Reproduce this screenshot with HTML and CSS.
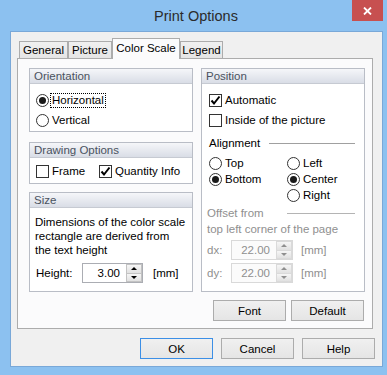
FILE: index.html
```html
<!DOCTYPE html>
<html lang="en">
<head>
  <meta charset="UTF-8" />
  <title>Print Options</title>
  <link rel="stylesheet" href="styles.css">
</head>
<body>
  <div class="window">
    <div class="titlebar">
      <div></div>
      <div class="title">Print Options</div>
      <div class="caption-buttons">
        <div class="close">
          <svg width="9" height="8" viewBox="0 0 9 8">
            <path d="M1 0.5 L8 7.5 M8 0.5 L1 7.5" stroke="#fff" stroke-width="1.8" fill="none"/>
          </svg>
        </div>
      </div>
    </div>

    <div class="client">
      <div class="tabs">
        <div class="tab tab-general">General</div>
        <div class="tab tab-picture">Picture</div>
        <div class="tab tab-scale active">Color Scale</div>
        <div class="tab tab-legend">Legend</div>
      </div>

      <div class="panel">
        <div class="columns">
          <div class="col">
            <div class="group orientation">
              <div class="group-head">Orientation</div>
              <div class="group-body">
                <div class="option">
                  <span class="radio checked"></span>
                  <span class="focus">Horizontal</span>
                </div>
                <div class="option">
                  <span class="radio"></span>
                  <span>Vertical</span>
                </div>
              </div>
            </div>

            <div class="group drawing">
              <div class="group-head">Drawing Options</div>
              <div class="group-body inline">
                <div class="option frame-opt">
                  <span class="check"></span>
                  <span>Frame</span>
                </div>
                <div class="option">
                  <span class="check">
                    <svg width="11" height="11" viewBox="0 0 11 11"><path d="M1.5 5.5 L4 8.5 L9.5 1.5" stroke="#000" stroke-width="2" fill="none"/></svg>
                  </span>
                  <span>Quantity Info</span>
                </div>
              </div>
            </div>

            <div class="group size">
              <div class="group-head">Size</div>
              <div class="group-body">
                <p class="note">Dimensions of the color scale rectangle are derived from the text height</p>
                <div class="field-row">
                  <span class="field-label height-label">Height:</span>
                  <div class="spin">
                    <span class="spin-value">3.00</span>
                    <span class="spin-arrows">
                      <span class="arrow up"></span>
                      <span class="arrow down"></span>
                    </span>
                  </div>
                  <span class="unit">[mm]</span>
                </div>
              </div>
            </div>
          </div>

          <div class="col">
            <div class="group position">
              <div class="group-head">Position</div>
              <div class="group-body">
                <div class="option">
                  <span class="check">
                    <svg width="11" height="11" viewBox="0 0 11 11"><path d="M1.5 5.5 L4 8.5 L9.5 1.5" stroke="#000" stroke-width="2" fill="none"/></svg>
                  </span>
                  <span>Automatic</span>
                </div>
                <div class="option">
                  <span class="check"></span>
                  <span>Inside of the picture</span>
                </div>

                <div class="sep-row align-head">
                  <span class="sep-label">Alignment</span>
                  <span class="sep-line"></span>
                </div>

                <div class="radio-grid">
                  <div class="option small"><span class="radio"></span><span>Top</span></div>
                  <div class="option small"><span class="radio"></span><span>Left</span></div>
                  <div class="option small"><span class="radio checked"></span><span>Bottom</span></div>
                  <div class="option small"><span class="radio checked"></span><span>Center</span></div>
                  <div></div>
                  <div class="option small"><span class="radio"></span><span>Right</span></div>
                </div>

                <div class="offset disabled">
                  <div class="sep-row offset-head">
                    <span class="sep-label">Offset from</span>
                    <span class="sep-line"></span>
                  </div>
                  <div class="offset-sub">top left corner of the page</div>

                  <div class="field-row">
                    <span class="field-label xy-label">dx:</span>
                    <div class="spin">
                      <span class="spin-value">22.00</span>
                      <span class="spin-arrows">
                        <span class="arrow up"></span>
                        <span class="arrow down"></span>
                      </span>
                    </div>
                    <span class="unit">[mm]</span>
                  </div>
                  <div class="field-row">
                    <span class="field-label xy-label">dy:</span>
                    <div class="spin">
                      <span class="spin-value">22.00</span>
                      <span class="spin-arrows">
                        <span class="arrow up"></span>
                        <span class="arrow down"></span>
                      </span>
                    </div>
                    <span class="unit">[mm]</span>
                  </div>
                </div>
              </div>
            </div>
          </div>
        </div>

        <div class="panel-buttons">
          <button class="btn">Font</button>
          <button class="btn">Default</button>
        </div>
      </div>

      <div class="dialog-buttons">
        <button class="btn default">OK</button>
        <button class="btn">Cancel</button>
        <button class="btn">Help</button>
      </div>
    </div>
  </div>
</body>
</html>
```

FILE: styles.css
```css
* {
  box-sizing: border-box;
}

body {
  margin: 0;
  background-color: #8cc1f0;
  color: #000;
  font-family: "Liberation Sans", Arial, sans-serif;
  font-size: 11.5px;
}

.window {
  width: 387px;
  height: 375px;
  background-color: #8cc1f0;
  display: flex;
  flex-direction: column;
}

/* title bar */
.titlebar {
  height: 31px;
  display: grid;
  grid-template-columns: 1fr auto 1fr;
}

.title {
  padding: 8px 0 0 5px;
  font-size: 14.5px;
  line-height: 16px;
  color: #2b2b2b;
}

.caption-buttons {
  display: flex;
  justify-content: flex-end;
  align-items: flex-start;
  padding-right: 4px;
}

.close {
  width: 31px;
  height: 21px;
  background-color: #c75050;
  display: flex;
  align-items: center;
  justify-content: center;
}

/* client area */
.client {
  margin-left: 10px;
  width: 373px;
  height: 336px;
  background-color: #f0f0f0;
  border: 1px solid #79a8d8;
  padding: 6px 7px 7px 6px;
  display: flex;
  flex-direction: column;
}

.tabs {
  height: 20px;
  margin-left: 2px;
  display: flex;
  align-items: flex-end;
}

.tab {
  height: 17px;
  border: 1px solid #acacac;
  border-bottom: none;
  background: linear-gradient(#f0f0f0, #e5e5e5);
  display: flex;
  align-items: center;
  justify-content: center;
}

.tab-general { width: 49px; }
.tab-picture { width: 44px; }
.tab-scale { width: 68px; }
.tab-legend { width: 43px; }

.tab.active {
  height: 21px;
  margin-bottom: -1px;
  padding-bottom: 2px;
  background: #fbfbfc;
  position: relative;
  z-index: 1;
}

.panel {
  width: 356px;
  height: 271px;
  border: 1px solid #acacac;
  background-color: #fbfbfc;
  padding: 9px 7px 7px 11px;
}

.columns {
  height: 224px;
  display: flex;
  gap: 8px;
}

.col {
  width: 164px;
  display: flex;
  flex-direction: column;
}

/* group boxes */
.group {
  border: 1px solid #b9bdc6;
  background-color: #fff;
}

.group-head {
  height: 15px;
  padding-left: 4px;
  line-height: 14px;
  color: #4a5260;
  background: linear-gradient(#f5f6f9, #d9dde6);
  border-bottom: 1px solid #c6cad2;
}

.orientation { height: 64px; }
.orientation .group-body { padding: 6px 0 0 6px; }

.drawing { height: 42px; margin-top: 10px; }
.drawing .group-body { padding: 3px 0 0 6px; }

.size { height: 100px; margin-top: 8px; }
.size .group-body { padding: 7px 4px 0 5px; }

.position { height: 224px; }
.position .group-body { padding: 6px 9px 0 7px; }

.inline {
  display: flex;
}

.option {
  height: 20px;
  display: flex;
  align-items: center;
  gap: 3px;
}

.option.small {
  height: 16px;
}

.frame-opt {
  width: 63px;
}

.radio {
  width: 13px;
  height: 13px;
  flex: none;
  border: 1px solid #333;
  border-radius: 50%;
  background-color: #fff;
  display: flex;
  align-items: center;
  justify-content: center;
}

.radio.checked::after {
  content: "";
  width: 7px;
  height: 7px;
  border-radius: 50%;
  background-color: #1a1a1a;
}

.check {
  width: 13px;
  height: 13px;
  flex: none;
  border: 1px solid #333;
  background-color: #fff;
  display: flex;
  align-items: center;
  justify-content: center;
}

.focus {
  margin-left: -2px;
  padding: 0 1px;
  line-height: 13px;
  border: 1px dotted #000;
}

.note {
  margin: 0;
  line-height: 14px;
}

.field-row {
  height: 20px;
  display: flex;
  align-items: center;
}

.size .field-row {
  margin-top: 6px;
}

.field-label.height-label {
  width: 46px;
  margin-left: 1px;
}

.field-label.xy-label {
  width: 24px;
}

.spin {
  width: 61px;
  height: 20px;
  border: 1px solid #abadb3;
  background-color: #fff;
  display: flex;
}

.spin-value {
  flex: 1;
  padding-right: 6px;
  text-align: right;
  line-height: 18px;
}

.spin-arrows {
  width: 16px;
  display: flex;
  flex-direction: column;
}

.arrow {
  flex: 1;
  border: 1px solid #c3c3c3;
  background: linear-gradient(#f6f6f6, #e1e1e1);
  display: flex;
  align-items: center;
  justify-content: center;
}

.arrow.down {
  border-top: none;
}

.arrow.up::before {
  content: "";
  border-left: 3px solid transparent;
  border-right: 3px solid transparent;
  border-bottom: 3px solid #000;
}

.arrow.down::before {
  content: "";
  border-left: 3px solid transparent;
  border-right: 3px solid transparent;
  border-top: 3px solid #000;
}

.unit {
  margin-left: 10px;
}

/* separators */
.sep-row {
  display: flex;
  align-items: center;
}

.sep-line {
  flex: 1;
  height: 1px;
  background-color: #a0a0a0;
}

.align-head {
  height: 20px;
  margin-top: 3px;
}

.align-head .sep-label {
  width: 60px;
}

.radio-grid {
  margin-top: 2px;
  display: grid;
  grid-template-columns: 78px auto;
}

.offset {
  margin: 2px 0 0 -2px;
}

.offset-head,
.offset-sub {
  height: 16px;
  line-height: 16px;
}

.offset-head .sep-label {
  width: 80px;
}

.offset .field-row {
  margin-top: 3px;
}

.offset .unit {
  margin-left: 8px;
}

.offset .spin {
  width: 62px;
}

.disabled {
  color: #8f8f8f;
}

.disabled .sep-line {
  background-color: #b4b4b4;
}

.disabled .spin {
  border-color: #d9d9d9;
  background-color: #fbfbfb;
}

.disabled .arrow {
  border-color: #dadada;
}

.disabled .arrow.up::before {
  border-bottom-color: #8f8f8f;
}

.disabled .arrow.down::before {
  border-top-color: #8f8f8f;
}

/* buttons */
.btn {
  width: 73px;
  height: 21px;
  padding: 0;
  border: 1px solid #acacac;
  background: linear-gradient(#f0f0f0, #e5e5e5);
  color: #000;
  font: inherit;
}

.btn.default {
  border-color: #3c8fe6;
}

.panel-buttons {
  margin-top: 8px;
  padding-right: 1px;
  display: flex;
  justify-content: flex-end;
  gap: 5px;
}

.dialog-buttons {
  margin-top: 9px;
  display: flex;
  justify-content: flex-end;
  gap: 8px;
}
```
